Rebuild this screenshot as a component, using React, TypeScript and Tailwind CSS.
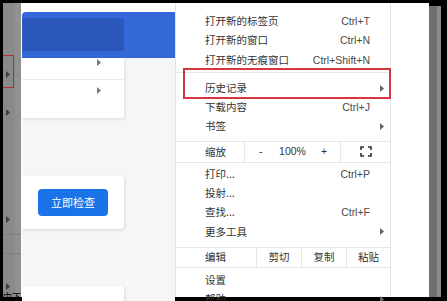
import React from "react";

const cjk = "font-['Noto_Sans_CJK_SC','Liberation_Sans',sans-serif]";
const latin = "font-['Liberation_Sans','Noto_Sans_CJK_SC',sans-serif]";

function Tri({ color = "#666" }: { color?: string }) {
  return (
    <svg width="4" height="7" viewBox="0 0 4 7" className="shrink-0">
      <path d="M0 0L4 3.5L0 7Z" fill={color} />
    </svg>
  );
}

function FullIcon() {
  return (
    <svg width="12" height="11" viewBox="0 0 12 11">
      <path d="M1 4V1h3M8 1h3v3M11 7v3H8M4 10H1V7" stroke="#333" strokeWidth="1.6" fill="none" />
    </svg>
  );
}

interface ItemProps {
  label: string;
  shortcut?: string;
  arrow?: boolean;
  h: string;
}

function Item({ label, shortcut, arrow, h }: ItemProps) {
  return (
    <div className={`flex items-center pl-[29px] ${h} ${arrow ? "pr-[6px]" : "pr-[20px]"}`}>
      <span className={`${cjk} text-[10.5px] leading-none text-[#333]`}>{label}</span>
      <span className="flex-1" />
      {shortcut ? <span className={`${latin} text-[10.5px] leading-none text-[#4a4a4a]`}>{shortcut}</span> : null}
      {arrow ? <Tri /> : null}
    </div>
  );
}

function Sep({ className = "" }: { className?: string }) {
  return <div className={`h-px bg-[#e6e6e6] ${className}`} />;
}

export default function App() {
  return (
    <div className="flex h-[301px] w-[447px] overflow-hidden bg-black pb-[4px] pl-[3px] pt-[3px]">
      {/* left gray strip */}
      <div className="relative flex w-[18px] shrink-0">
        <div className="w-[12px] bg-[#8a8a8a]" />
        <div className="w-[6px] bg-[#919191]" />
        <div className="absolute left-0 top-[52px] h-[33px] w-[11px] border-y-[1.5px] border-r-[1.5px] border-[#b0303a]" />
        <div className="absolute left-[3px] top-[68px]"><Tri color="#3f3f3f" /></div>
        <div className="absolute left-[3px] top-[106px]"><Tri color="#3f3f3f" /></div>
        <div className="absolute left-0 top-[231px] h-px w-[18px] bg-[#7e7e7e]" />
        <div className="absolute left-0 top-[250px] h-px w-[18px] bg-[#7e7e7e]" />
        <div className="absolute left-[3px] top-[213px]"><Tri color="#3f3f3f" /></div>
        <div className="absolute left-[3px] top-[280px]"><Tri color="#3f3f3f" /></div>
        <div className={`absolute -bottom-[4px] left-0 ${cjk} text-[9px] leading-none text-black`}>中下</div>
      </div>
      <div className="w-px shrink-0 bg-white" />

      {/* page content */}
      <div className="flex w-[153px] shrink-0 flex-col bg-white">
        <div className="h-[9px] shrink-0" />
        <div className="h-[46px] shrink-0 rounded-tl-[4px] bg-[#3468d8] pt-[6px]">
          <div className="h-[33px] w-[102px] rounded-r-[3px] bg-[#2c58bc]" />
        </div>
        <div className="flex flex-1 flex-col bg-[#f5f6f8]">
          <div className="h-[60px] w-[102px] bg-white shadow-[1px_1px_3px_rgba(0,0,0,0.12)]">
            <div className="flex h-[22px] justify-end border-b border-[#ececec] pr-[23px] pt-[1px]">
              <Tri color="#777" />
            </div>
            <div className="flex justify-end pr-[23px] pt-[7px]">
              <Tri color="#777" />
            </div>
          </div>
          <div className="mt-[58px] h-[53px] w-[102px] rounded-r-[3px] bg-white pl-[16px] pt-[13px] shadow-[1px_1px_3px_rgba(0,0,0,0.12)]">
            <div className={`flex h-[27px] w-[70px] items-center justify-center rounded-[4px] bg-[#1a73e8] ${cjk} text-[11px] text-white`}>
              立即检查
            </div>
          </div>
          <div className="mt-[57px] h-[30px] w-[102px] rounded-tr-[3px] bg-white shadow-[1px_1px_3px_rgba(0,0,0,0.12)]" />
        </div>
      </div>

      {/* menu */}
      <div className="relative w-[216px] shrink-0 border-x border-[#e2e2e2] bg-white pt-[8px]">
        <Item label="打开新的标签页" shortcut="Ctrl+T" h="h-[19.5px]" />
        <Item label="打开新的窗口" shortcut="Ctrl+N" h="h-[19.5px]" />
        <Item label="打开新的无痕窗口" shortcut="Ctrl+Shift+N" h="h-[19.5px]" />
        <Sep className="mb-[6px] mt-[2px]" />
        <Item label="历史记录" arrow h="h-[19px]" />
        <Item label="下载内容" shortcut="Ctrl+J" h="h-[19px]" />
        <Item label="书签" arrow h="h-[19px]" />
        <Sep className="mt-[5px]" />
        <div className="flex h-[20px]">
          <div className={`flex w-[68px] items-center pl-[29px] ${cjk} text-[10.5px] text-[#333]`}>缩放</div>
          <div className="w-px bg-[#e6e6e6]" />
          <div className={`grid w-[95px] grid-cols-3 items-center text-center ${latin} text-[10.5px] text-[#333]`}>
            <span>-</span>
            <span>100%</span>
            <span>+</span>
          </div>
          <div className="w-px bg-[#e6e6e6]" />
          <div className="flex flex-1 items-center justify-center">
            <FullIcon />
          </div>
        </div>
        <Sep className="mb-[2px]" />
        <Item label="打印..." shortcut="Ctrl+P" h="h-[19.25px]" />
        <Item label="投射..." h="h-[19.25px]" />
        <Item label="查找..." shortcut="Ctrl+F" h="h-[19.25px]" />
        <Item label="更多工具" arrow h="h-[19.25px]" />
        <Sep className="mt-[5px]" />
        <div className={`flex h-[19px] ${cjk} text-[10.5px] text-[#333]`}>
          <div className="flex w-[80px] items-center pl-[29px]">编辑</div>
          <div className="w-px bg-[#e6e6e6]" />
          <div className="flex w-[44px] items-center justify-center">剪切</div>
          <div className="w-px bg-[#e6e6e6]" />
          <div className="flex w-[44px] items-center justify-center">复制</div>
          <div className="w-px bg-[#e6e6e6]" />
          <div className="flex flex-1 items-center justify-center">粘贴</div>
        </div>
        <Sep className="mb-[3px]" />
        <Item label="设置" h="h-[19px]" />
        <Item label="帮助" arrow h="h-[19px]" />
        <div className="absolute left-[7px] top-[65px] h-[31px] w-[208px] border-2 border-[#d8363f]" />
      </div>

      {/* right margin */}
      <div className="w-[38px] shrink-0 bg-white" />
      <div className="mt-[3px] w-[8px] shrink-0 bg-[#6f6f6f]" />
      <div className="mt-[3px] w-[4px] shrink-0 bg-[#8a8a8a]" />
      <div className="w-[6px] shrink-0" />
    </div>
  );
}
